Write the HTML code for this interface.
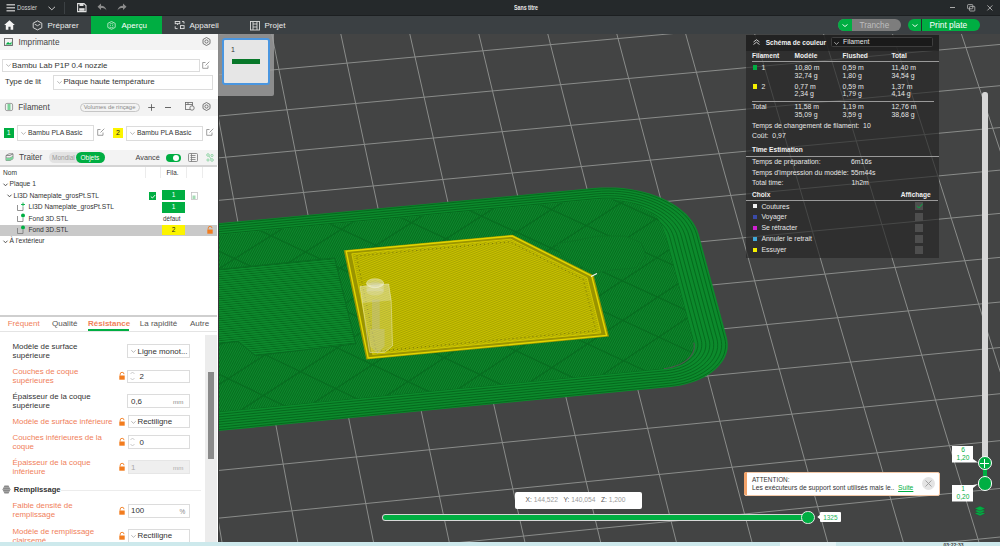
<!DOCTYPE html>
<html><head><meta charset="utf-8">
<style>
*{box-sizing:border-box;margin:0;padding:0}
body{width:1000px;height:546px;overflow:hidden;position:relative;font-family:"Liberation Sans",sans-serif;background:#434444}
.a{position:absolute}
.t{position:absolute;white-space:nowrap;line-height:1}
svg{position:absolute;overflow:visible}
.hd{position:absolute;left:0;width:218px;background:#f3f3f3}
.cb{position:absolute;border:1px solid #dcdcdc;background:#fff}
.ui{font-size:8px;color:#333}
.or{color:#f0805a}
.lk{position:absolute;width:6px;height:8px}
.inp{position:absolute;left:127px;width:63px;height:14px;border:1px solid #dcdcdc;background:#fff}
.st{color:#e6e6e6;font-size:6.9px}
.sb{color:#f0f0f0;font-size:6.6px;font-weight:700}
</style></head><body>

<!-- ============ TOP TITLE BAR ============ -->
<div class="a" style="left:0;top:0;width:1000px;height:16px;background:#25292b"></div>
<div class="a" style="left:0;top:15px;width:1000px;height:1px;background:#1c1f21"></div>
<svg style="left:6px;top:4px" width="10" height="8"><g stroke="#d6d6d6" stroke-width="1.2"><line x1="0.5" y1="0.8" x2="9" y2="0.8"/><line x1="0.5" y1="3.8" x2="9" y2="3.8"/><line x1="0.5" y1="6.8" x2="9" y2="6.8"/></g></svg>
<div class="t" style="left:17.3px;top:3.8px;font-size:7.2px;color:#d0d0d0;transform:scaleX(0.82);transform-origin:left">Dossier</div>
<svg style="left:48px;top:6px" width="8" height="5"><polyline points="0.5,0.8 3.8,3.8 7,0.8" stroke="#c8c8c8" stroke-width="1" fill="none"/></svg>
<div class="a" style="left:64px;top:2px;width:1px;height:12px;background:#3c4144"></div>
<svg style="left:77px;top:2.6px" width="10" height="10"><path d="M0.6 0.6 H7 L9 2.6 V8.6 H0.6 Z" fill="none" stroke="#e0e0e0" stroke-width="1.1"/><rect x="2.2" y="5.2" width="5.4" height="2.6" fill="#e0e0e0"/><rect x="2.5" y="0.6" width="4" height="2.4" fill="#e0e0e0"/></svg>
<svg style="left:97px;top:3.3px" width="10" height="8"><path d="M4 0.5 L0.5 3.8 L4 7 V5 C6.5 5 8.5 5.5 9.5 7.5 C9 4.5 7 2.8 4 2.7 Z" fill="#8c8c8c"/></svg>
<svg style="left:117px;top:3.3px" width="10" height="8"><path d="M6 0.5 L9.5 3.8 L6 7 V5 C3.5 5 1.5 5.5 0.5 7.5 C1 4.5 3 2.8 6 2.7 Z" fill="#8c8c8c"/></svg>
<div class="t" style="left:513.6px;top:5.1px;font-size:6.6px;color:#e8e8e8;font-weight:700;transform:scaleX(0.8);transform-origin:left">Sans titre</div>
<div class="a" style="left:950px;top:6.7px;width:5px;height:1px;background:#aaa"></div>
<svg style="left:966.5px;top:3.8px" width="9" height="8"><rect x="0.6" y="0.6" width="5.2" height="4.2" rx="0.6" fill="none" stroke="#b4b4b4" stroke-width="0.85"/><rect x="2.6" y="2.4" width="5.2" height="4.6" rx="0.6" fill="none" stroke="#b4b4b4" stroke-width="0.85"/></svg>
<svg style="left:986.5px;top:4.8px" width="6" height="6"><g stroke="#b4b4b4" stroke-width="0.9"><line x1="0.4" y1="0.4" x2="5.4" y2="5.4"/><line x1="5.4" y1="0.4" x2="0.4" y2="5.4"/></g></svg>

<!-- ============ TAB BAR ============ -->
<div class="a" style="left:0;top:16px;width:1000px;height:18px;background:#3b4043"></div>
<svg style="left:4px;top:20px" width="11" height="10"><path d="M5.5 0.3 L10.8 5 H9.2 V9.8 H6.6 V6.8 H4.4 V9.8 H1.8 V5 H0.2 Z" fill="#f4f4f4"/></svg>
<svg style="left:32px;top:20px" width="11" height="11"><path d="M5.5 0.9 L9.8 3.1 V7.7 L5.5 9.9 L1.2 7.7 V3.1 Z" fill="none" stroke="#d8d8d8" stroke-width="0.95" stroke-linejoin="round"/><path d="M2.6 4.1 L5.5 5.7 L8.4 4.1" fill="none" stroke="#d8d8d8" stroke-width="0.9"/></svg>
<div class="t" style="left:47.5px;top:21.7px;font-size:8px;color:#ececec">Préparer</div>
<div class="a" style="left:91px;top:16px;width:71px;height:18px;background:#00ae42"></div>
<svg style="left:107px;top:20.5px" width="9" height="9"><path d="M4.5 0.5 L8.2 2.4 V6.4 L4.5 8.3 L0.8 6.4 V2.4 Z" fill="none" stroke="#b8e8c8" stroke-width="0.9" stroke-linejoin="round"/><path d="M2.6 3.2 Q4.5 1.6 6.4 3.2 M2.5 6 Q4.5 7.4 6.5 6" fill="none" stroke="#b8e8c8" stroke-width="0.8"/><circle cx="3.4" cy="4.6" r="0.5" fill="#b8e8c8"/><circle cx="5.6" cy="4.6" r="0.5" fill="#b8e8c8"/></svg>
<div class="t" style="left:121.5px;top:21.7px;font-size:8px;color:#fff">Aperçu</div>
<svg style="left:174px;top:20px" width="11" height="10"><g fill="none" stroke="#e0e0e0" stroke-width="0.9"><rect x="1.2" y="1.5" width="4.6" height="2.2"/><path d="M3.5 3.7 V4.9 M8 1.6 H10 V3.6 M1.2 6.3 V8.6 H3.6"/><rect x="6.5" y="5.6" width="3.6" height="3"/></g></svg>
<div class="t" style="left:189.5px;top:21.7px;font-size:8px;color:#ececec">Appareil</div>
<svg style="left:250px;top:20.5px" width="10" height="10"><g fill="none" stroke="#dcdcdc" stroke-width="0.9"><rect x="0.5" y="0.5" width="9" height="8.5"/><path d="M3 0.5 V9 M7 0.5 V9 M3 3 H7 M3 6 H7"/></g></svg>
<div class="t" style="left:264.5px;top:21.7px;font-size:8px;color:#ececec">Projet</div>
<!-- Tranche -->
<div class="a" style="left:838px;top:19px;width:62.5px;height:12px;border-radius:6px;background:#7d7d7d;overflow:hidden"><div class="a" style="left:0;top:0;width:13.5px;height:12px;background:#00ae42"></div></div>
<svg style="left:842px;top:24px" width="6" height="3"><polyline points="0.5,0.5 3,2.5 5.5,0.5" stroke="#fff" stroke-width="0.9" fill="none"/></svg>
<div class="t" style="left:859.5px;top:22px;font-size:8.2px;color:#bdbdbd">Tranche</div>
<!-- Print plate -->
<div class="a" style="left:908px;top:19px;width:72px;height:12px;border-radius:6px;background:#00ae42"></div>
<div class="a" style="left:921px;top:19px;width:1px;height:12px;background:#25292b"></div>
<svg style="left:912px;top:24px" width="6" height="3"><polyline points="0.5,0.5 3,2.5 5.5,0.5" stroke="#fff" stroke-width="0.9" fill="none"/></svg>
<div class="t" style="left:929.5px;top:21.3px;font-size:8.4px;color:#fff">Print plate</div>

<!-- ============ VIEWPORT ============ -->
<div class="a" style="left:218px;top:34px;width:782px;height:508px;overflow:hidden"><svg width="782" height="508" viewBox="0 0 782 508" style="position:absolute;left:0;top:0">
<defs>
 <pattern id="gstripe" patternUnits="userSpaceOnUse" width="6" height="2.2" patternTransform="rotate(-5.5)">
   <rect width="6" height="2.2" fill="#0d8b2d"/><rect y="1.35" width="6" height="0.85" fill="#066c1e"/>
 </pattern>
 <pattern id="gstripe2" patternUnits="userSpaceOnUse" width="6" height="2.0" patternTransform="rotate(-62)">
   <rect width="6" height="2.0" fill="#0d8a2d"/><rect y="1.05" width="6" height="0.95" fill="#066a1e"/>
 </pattern>
 <pattern id="ystripe" patternUnits="userSpaceOnUse" width="6" height="2" patternTransform="rotate(-22)">
   <rect width="6" height="2" fill="#c9c300"/><rect y="1.25" width="6" height="0.75" fill="#9d9800"/>
 </pattern>
 <clipPath id="innerclip"><polygon points="377.4,165.6 382.1,165.2 386.7,165.1 391.4,165.3 396.1,165.6 400.7,166.2 405.2,166.9 409.6,167.9 413.9,169.1 418.0,170.5 421.9,172.1 425.6,173.9 429.0,175.8 432.2,178.0 435.1,180.2 437.8,182.6 440.1,185.1 442.1,187.7 443.7,190.4 445.0,193.2 445.9,196.0 475.8,308.7 476.2,310.5 476.3,312.3 476.2,314.0 475.9,315.8 475.4,317.5 474.6,319.2 473.7,320.9 472.5,322.5 471.1,324.0 469.5,325.5 467.8,326.9 465.9,328.2 463.8,329.4 461.6,330.5 459.2,331.5 456.7,332.3 454.2,333.1 451.5,333.7 448.8,334.2 446.0,334.5 -230.4,400.2 -231.0,400.2 -231.6,400.3 -232.1,400.2 -232.7,400.2 -233.3,400.1 -233.8,400.0 -234.3,399.9 -234.9,399.7 -235.3,399.6 -235.8,399.4 -236.2,399.1 -236.6,398.9 -237.0,398.6 -237.3,398.3 -237.6,398.0 -237.8,397.7 -238.0,397.4 -238.2,397.0 -238.3,396.7 -238.4,396.3 -260.7,229.8 -260.7,229.5 -260.7,229.1 -260.7,228.8 -260.6,228.4 -260.4,228.1 -260.2,227.8 -260.0,227.4 -259.7,227.1 -259.4,226.8 -259.0,226.6 -258.7,226.3 -258.3,226.0 -257.8,225.8 -257.4,225.6 -256.9,225.4 -256.4,225.2 -255.8,225.1 -255.3,225.0 -254.7,224.9 -254.2,224.8"/></clipPath>
</defs>
<rect width="782" height="508" fill="#434444"/>
<g stroke="#8a8c8a" stroke-width="1" fill="none"><line x1="-236.8" y1="-97.0" x2="-120.0" y2="695.5"/>
<line x1="-169.9" y1="-102.8" x2="-43.0" y2="687.6"/>
<line x1="-103.2" y1="-108.7" x2="33.8" y2="679.7"/>
<line x1="-36.7" y1="-114.5" x2="110.4" y2="671.8"/>
<line x1="29.7" y1="-120.4" x2="186.7" y2="663.9"/>
<line x1="95.9" y1="-126.2" x2="262.8" y2="656.1"/>
<line x1="161.9" y1="-132.0" x2="338.7" y2="648.3"/>
<line x1="227.8" y1="-137.8" x2="414.4" y2="640.5"/>
<line x1="293.5" y1="-143.5" x2="489.9" y2="632.7"/>
<line x1="359.1" y1="-149.3" x2="565.1" y2="625.0"/>
<line x1="424.4" y1="-155.1" x2="640.1" y2="617.3"/>
<line x1="489.7" y1="-160.8" x2="715.0" y2="609.6"/>
<line x1="554.7" y1="-166.5" x2="789.6" y2="601.9"/>
<line x1="619.6" y1="-172.2" x2="864.0" y2="594.2"/>
<line x1="684.4" y1="-177.9" x2="938.1" y2="586.6"/>
<line x1="749.0" y1="-183.6" x2="1012.1" y2="579.0"/>
<line x1="813.4" y1="-189.2" x2="1085.9" y2="571.4"/>
<line x1="877.6" y1="-194.9" x2="1159.5" y2="563.8"/>
<line x1="-366.3" y1="-46.6" x2="955.9" y2="-163.7"/>
<line x1="-361.6" y1="-7.4" x2="970.3" y2="-126.3"/>
<line x1="-356.8" y1="32.4" x2="984.9" y2="-88.4"/>
<line x1="-351.9" y1="72.8" x2="999.7" y2="-49.9"/>
<line x1="-346.9" y1="113.9" x2="1014.7" y2="-10.9"/>
<line x1="-341.9" y1="155.5" x2="1029.9" y2="28.8"/>
<line x1="-336.7" y1="197.8" x2="1045.4" y2="69.0"/>
<line x1="-331.5" y1="240.8" x2="1061.1" y2="109.9"/>
<line x1="-326.3" y1="284.5" x2="1077.1" y2="151.4"/>
<line x1="-320.9" y1="328.9" x2="1093.3" y2="193.6"/>
<line x1="-315.4" y1="374.0" x2="1109.8" y2="236.4"/>
<line x1="-309.9" y1="419.8" x2="1126.5" y2="280.0"/>
<line x1="-304.2" y1="466.4" x2="1143.5" y2="324.2"/>
<line x1="-298.5" y1="513.8" x2="1160.8" y2="369.1"/>
<line x1="-292.7" y1="561.9" x2="1178.4" y2="414.8"/>
<line x1="-286.8" y1="610.9" x2="1196.2" y2="461.2"/>
<line x1="-280.7" y1="660.7" x2="1214.4" y2="508.3"/>
<line x1="-274.6" y1="711.4" x2="1232.8" y2="556.3"/></g>
<polygon points="375.9,154.1 383.0,153.6 390.2,153.4 397.3,153.6 404.4,154.1 411.5,155.0 418.4,156.2 425.1,157.7 431.6,159.5 437.9,161.7 443.8,164.1 449.5,166.8 454.8,169.8 459.7,173.0 464.1,176.4 468.2,180.1 471.7,183.9 474.8,187.9 477.3,192.0 479.3,196.2 480.8,200.5 508.9,304.0 509.5,307.3 509.8,310.6 509.7,314.0 509.1,317.3 508.1,320.6 506.7,323.8 504.9,327.0 502.6,330.1 500.0,333.0 497.1,335.8 493.8,338.5 490.1,340.9 486.2,343.2 482.0,345.3 477.5,347.2 472.8,348.8 467.8,350.3 462.8,351.4 457.6,352.3 452.2,353.0 -227.8,419.3 -228.4,419.4 -229.0,419.4 -229.6,419.3 -230.1,419.3 -230.7,419.2 -231.2,419.1 -231.8,419.0 -232.3,418.8 -232.8,418.7 -233.2,418.5 -233.6,418.2 -234.0,418.0 -234.4,417.7 -234.7,417.4 -235.0,417.1 -235.3,416.8 -235.5,416.5 -235.6,416.1 -235.7,415.8 -235.8,415.4 -262.3,218.2 -262.3,217.8 -262.3,217.5 -262.2,217.2 -262.1,216.8 -262.0,216.5 -261.8,216.2 -261.5,215.8 -261.3,215.5 -261.0,215.2 -260.6,214.9 -260.2,214.7 -259.8,214.4 -259.4,214.2 -258.9,214.0 -258.4,213.8 -257.9,213.6 -257.4,213.5 -256.9,213.4 -256.3,213.3 -255.8,213.2" fill="#0c8a2c"/>
<g fill="none" stroke="#05641b" stroke-width="0.85"><polygon points="376.2,155.3 383.2,154.9 390.2,154.7 397.2,154.9 404.1,155.4 411.0,156.2 417.7,157.4 424.3,158.9 430.6,160.7 436.8,162.8 442.6,165.1 448.1,167.8 453.3,170.7 458.1,173.8 462.4,177.2 466.4,180.7 469.9,184.5 472.8,188.4 475.3,192.4 477.3,196.5 478.7,200.7 506.7,304.2 507.4,307.4 507.7,310.6 507.5,313.9 506.9,317.1 506.0,320.3 504.6,323.4 502.8,326.5 500.7,329.4 498.2,332.3 495.3,335.0 492.1,337.6 488.6,340.0 484.8,342.2 480.7,344.2 476.3,346.0 471.8,347.6 467.0,349.0 462.1,350.1 457.0,351.0 451.9,351.6 -225.8,417.7 -226.4,417.8 -227.0,417.8 -227.5,417.7 -228.1,417.7 -228.7,417.6 -229.2,417.5 -229.7,417.4 -230.3,417.2 -230.7,417.1 -231.2,416.9 -231.6,416.6 -232.0,416.4 -232.4,416.1 -232.7,415.8 -233.0,415.5 -233.2,415.2 -233.4,414.9 -233.6,414.5 -233.7,414.2 -233.8,413.8 -260.0,219.3 -260.0,218.9 -260.0,218.6 -259.9,218.2 -259.8,217.9 -259.7,217.6 -259.5,217.2 -259.2,216.9 -259.0,216.6 -258.7,216.3 -258.3,216.0 -257.9,215.8 -257.5,215.5 -257.1,215.3 -256.6,215.1 -256.1,214.9 -255.6,214.7 -255.1,214.6 -254.6,214.5 -254.0,214.4 -253.5,214.3"/><polygon points="376.8,157.7 383.5,157.2 390.1,157.0 396.8,157.2 403.5,157.7 410.1,158.5 416.5,159.6 422.8,161.0 428.9,162.8 434.7,164.8 440.3,167.0 445.6,169.6 450.6,172.3 455.1,175.3 459.3,178.5 463.1,181.9 466.4,185.5 469.3,189.3 471.6,193.1 473.5,197.1 474.9,201.1 502.8,304.5 503.4,307.6 503.7,310.6 503.5,313.7 503.0,316.7 502.1,319.7 500.8,322.6 499.1,325.5 497.1,328.3 494.8,331.0 492.1,333.5 489.0,335.9 485.7,338.2 482.1,340.3 478.3,342.2 474.2,343.9 469.9,345.4 465.4,346.7 460.8,347.7 456.1,348.6 451.2,349.2 -222.1,414.8 -222.7,414.8 -223.3,414.8 -223.8,414.8 -224.4,414.8 -225.0,414.7 -225.5,414.6 -226.0,414.5 -226.6,414.3 -227.0,414.1 -227.5,413.9 -227.9,413.7 -228.3,413.5 -228.7,413.2 -229.0,412.9 -229.3,412.6 -229.5,412.3 -229.7,411.9 -229.9,411.6 -230.0,411.2 -230.1,410.9 -255.7,221.3 -255.8,220.9 -255.8,220.6 -255.7,220.2 -255.6,219.9 -255.4,219.6 -255.2,219.2 -255.0,218.9 -254.7,218.6 -254.4,218.3 -254.1,218.0 -253.7,217.8 -253.3,217.5 -252.8,217.3 -252.4,217.1 -251.9,216.9 -251.4,216.7 -250.9,216.6 -250.3,216.5 -249.8,216.4 -249.2,216.3"/><polygon points="377.4,160.0 383.7,159.5 390.1,159.4 396.5,159.5 402.9,160.0 409.2,160.8 415.3,161.8 421.3,163.2 427.1,164.8 432.7,166.7 438.1,168.9 443.1,171.3 447.8,174.0 452.2,176.9 456.2,179.9 459.8,183.2 463.0,186.6 465.7,190.1 467.9,193.8 469.7,197.6 471.0,201.5 498.9,304.9 499.5,307.8 499.7,310.6 499.6,313.5 499.1,316.3 498.2,319.1 497.0,321.9 495.5,324.6 493.6,327.2 491.4,329.7 488.8,332.1 486.0,334.3 482.9,336.4 479.5,338.4 475.9,340.2 472.1,341.8 468.1,343.2 463.9,344.4 459.6,345.4 455.1,346.1 450.6,346.7 -218.4,411.8 -219.0,411.9 -219.6,411.9 -220.1,411.9 -220.7,411.8 -221.3,411.8 -221.8,411.7 -222.3,411.5 -222.8,411.4 -223.3,411.2 -223.8,411.0 -224.2,410.8 -224.6,410.5 -225.0,410.3 -225.3,410.0 -225.6,409.7 -225.8,409.3 -226.0,409.0 -226.2,408.7 -226.3,408.3 -226.4,408.0 -251.5,223.3 -251.5,222.9 -251.5,222.6 -251.5,222.2 -251.3,221.9 -251.2,221.6 -251.0,221.2 -250.8,220.9 -250.5,220.6 -250.2,220.3 -249.8,220.0 -249.5,219.8 -249.1,219.5 -248.6,219.3 -248.2,219.1 -247.7,218.9 -247.2,218.7 -246.6,218.6 -246.1,218.5 -245.5,218.4 -245.0,218.3"/><polygon points="378.0,162.3 384.0,161.9 390.1,161.7 396.2,161.9 402.3,162.3 408.2,163.1 414.1,164.1 419.8,165.4 425.4,166.9 430.7,168.7 435.8,170.8 440.6,173.1 445.1,175.6 449.3,178.4 453.1,181.3 456.5,184.4 459.5,187.7 462.1,191.0 464.3,194.6 465.9,198.2 467.2,201.8 495.0,305.3 495.5,307.9 495.7,310.6 495.6,313.3 495.1,315.9 494.3,318.5 493.2,321.1 491.8,323.6 490.0,326.0 487.9,328.4 485.6,330.6 482.9,332.7 480.1,334.7 476.9,336.5 473.6,338.1 470.0,339.6 466.3,340.9 462.4,342.1 458.3,343.0 454.2,343.7 450.0,344.2 -214.7,408.9 -215.3,409.0 -215.9,409.0 -216.4,409.0 -217.0,408.9 -217.6,408.8 -218.1,408.7 -218.6,408.6 -219.2,408.5 -219.6,408.3 -220.1,408.1 -220.5,407.9 -220.9,407.6 -221.3,407.3 -221.6,407.0 -221.9,406.7 -222.1,406.4 -222.3,406.1 -222.5,405.7 -222.6,405.4 -222.7,405.0 -247.3,225.3 -247.3,224.9 -247.3,224.6 -247.2,224.2 -247.1,223.9 -247.0,223.6 -246.8,223.2 -246.5,222.9 -246.3,222.6 -246.0,222.3 -245.6,222.0 -245.2,221.8 -244.8,221.5 -244.4,221.3 -243.9,221.1 -243.4,220.9 -242.9,220.7 -242.4,220.6 -241.9,220.4 -241.3,220.4 -240.8,220.3"/><polygon points="378.6,164.6 384.3,164.2 390.1,164.1 395.9,164.2 401.7,164.6 407.3,165.3 412.9,166.3 418.4,167.5 423.6,169.0 428.7,170.7 433.5,172.7 438.1,174.9 442.4,177.3 446.3,179.9 449.9,182.7 453.2,185.6 456.1,188.7 458.5,191.9 460.6,195.3 462.2,198.7 463.3,202.2 491.1,305.7 491.6,308.1 491.8,310.6 491.6,313.1 491.2,315.5 490.5,317.9 489.4,320.3 488.1,322.7 486.4,324.9 484.5,327.1 482.3,329.1 479.9,331.1 477.2,332.9 474.3,334.6 471.2,336.1 467.9,337.5 464.4,338.7 460.8,339.7 457.1,340.6 453.2,341.3 449.3,341.8 -211.0,406.0 -211.6,406.0 -212.2,406.1 -212.7,406.0 -213.3,406.0 -213.9,405.9 -214.4,405.8 -214.9,405.7 -215.5,405.5 -215.9,405.4 -216.4,405.2 -216.8,404.9 -217.2,404.7 -217.6,404.4 -217.9,404.1 -218.2,403.8 -218.4,403.5 -218.6,403.2 -218.8,402.8 -218.9,402.5 -219.0,402.1 -243.0,227.3 -243.1,226.9 -243.0,226.6 -243.0,226.2 -242.9,225.9 -242.7,225.6 -242.5,225.2 -242.3,224.9 -242.0,224.6 -241.7,224.3 -241.4,224.0 -241.0,223.8 -240.6,223.5 -240.1,223.3 -239.7,223.1 -239.2,222.9 -238.7,222.7 -238.2,222.6 -237.6,222.4 -237.1,222.4 -236.5,222.3"/><polygon points="379.2,166.9 384.6,166.5 390.1,166.4 395.6,166.5 401.0,166.9 406.4,167.6 411.7,168.5 416.9,169.7 421.9,171.1 426.7,172.7 431.3,174.6 435.6,176.7 439.6,179.0 443.4,181.4 446.8,184.1 449.9,186.9 452.6,189.8 454.9,192.8 456.9,196.0 458.4,199.2 459.5,202.6 487.2,306.1 487.6,308.3 487.8,310.6 487.7,312.9 487.3,315.1 486.6,317.4 485.6,319.6 484.4,321.7 482.9,323.8 481.1,325.8 479.1,327.7 476.8,329.5 474.4,331.1 471.7,332.7 468.8,334.1 465.8,335.4 462.6,336.5 459.3,337.4 455.8,338.2 452.3,338.8 448.7,339.3 -207.3,403.1 -207.9,403.1 -208.5,403.1 -209.1,403.1 -209.6,403.1 -210.2,403.0 -210.7,402.9 -211.3,402.8 -211.8,402.6 -212.3,402.4 -212.7,402.2 -213.1,402.0 -213.5,401.8 -213.9,401.5 -214.2,401.2 -214.5,400.9 -214.8,400.6 -215.0,400.3 -215.1,399.9 -215.2,399.6 -215.3,399.2 -238.8,229.3 -238.8,228.9 -238.8,228.6 -238.7,228.2 -238.6,227.9 -238.5,227.6 -238.3,227.2 -238.1,226.9 -237.8,226.6 -237.5,226.3 -237.1,226.0 -236.8,225.8 -236.3,225.5 -235.9,225.3 -235.4,225.1 -235.0,224.9 -234.4,224.7 -233.9,224.6 -233.4,224.4 -232.8,224.4 -232.3,224.3"/><polygon points="379.7,169.2 384.9,168.9 390.1,168.7 395.3,168.9 400.4,169.3 405.5,169.9 410.5,170.8 415.4,171.9 420.1,173.2 424.7,174.7 429.0,176.5 433.1,178.5 436.9,180.6 440.4,182.9 443.7,185.4 446.6,188.1 449.1,190.9 451.3,193.7 453.2,196.7 454.6,199.8 455.7,202.9 483.3,306.4 483.7,308.5 483.8,310.6 483.7,312.7 483.4,314.7 482.7,316.8 481.8,318.8 480.7,320.7 479.3,322.6 477.7,324.5 475.9,326.2 473.8,327.8 471.5,329.4 469.1,330.8 466.5,332.1 463.7,333.2 460.8,334.3 457.7,335.1 454.6,335.8 451.3,336.4 448.0,336.8 -203.6,400.2 -204.2,400.2 -204.8,400.2 -205.4,400.2 -205.9,400.2 -206.5,400.1 -207.0,400.0 -207.6,399.9 -208.1,399.7 -208.6,399.5 -209.0,399.3 -209.4,399.1 -209.8,398.8 -210.2,398.6 -210.5,398.3 -210.8,398.0 -211.1,397.7 -211.3,397.3 -211.4,397.0 -211.5,396.6 -211.6,396.3 -234.5,231.3 -234.6,230.9 -234.6,230.6 -234.5,230.2 -234.4,229.9 -234.2,229.6 -234.0,229.2 -233.8,228.9 -233.5,228.6 -233.2,228.3 -232.9,228.0 -232.5,227.8 -232.1,227.5 -231.7,227.3 -231.2,227.1 -230.7,226.9 -230.2,226.7 -229.7,226.6 -229.1,226.5 -228.6,226.4 -228.0,226.3"/><polygon points="380.3,171.5 385.2,171.2 390.1,171.1 395.0,171.2 399.8,171.6 404.6,172.2 409.3,173.0 413.9,174.0 418.4,175.3 422.6,176.7 426.7,178.4 430.6,180.2 434.2,182.3 437.5,184.5 440.5,186.8 443.3,189.3 445.7,191.9 447.8,194.6 449.5,197.5 450.8,200.3 451.8,203.3 479.3,306.8 479.7,308.7 479.9,310.6 479.8,312.5 479.4,314.3 478.9,316.2 478.1,318.0 477.0,319.8 475.8,321.5 474.3,323.2 472.6,324.7 470.8,326.2 468.7,327.6 466.5,328.9 464.1,330.1 461.6,331.1 458.9,332.0 456.2,332.8 453.3,333.5 450.4,334.0 447.4,334.4 -200.0,397.2 -200.5,397.3 -201.1,397.3 -201.7,397.3 -202.3,397.2 -202.8,397.2 -203.4,397.1 -203.9,396.9 -204.4,396.8 -204.9,396.6 -205.3,396.4 -205.8,396.2 -206.2,395.9 -206.5,395.7 -206.9,395.4 -207.1,395.1 -207.4,394.8 -207.6,394.4 -207.7,394.1 -207.9,393.7 -207.9,393.4 -230.3,233.3 -230.3,232.9 -230.3,232.6 -230.2,232.3 -230.1,231.9 -230.0,231.6 -229.8,231.2 -229.6,230.9 -229.3,230.6 -229.0,230.3 -228.6,230.0 -228.3,229.8 -227.9,229.5 -227.4,229.3 -227.0,229.1 -226.5,228.9 -226.0,228.7 -225.4,228.6 -224.9,228.5 -224.3,228.4 -223.8,228.3"/><polygon points="380.9,173.9 385.5,173.5 390.1,173.4 394.7,173.6 399.2,173.9 403.7,174.5 408.1,175.2 412.4,176.2 416.6,177.4 420.6,178.7 424.4,180.3 428.0,182.0 431.4,183.9 434.6,186.0 437.4,188.2 440.0,190.5 442.2,193.0 444.2,195.5 445.8,198.2 447.1,200.9 448.0,203.6 475.4,307.2 475.8,308.9 475.9,310.6 475.8,312.3 475.5,313.9 475.0,315.6 474.3,317.2 473.3,318.8 472.2,320.4 470.9,321.8 469.4,323.3 467.7,324.6 465.9,325.8 463.9,327.0 461.7,328.0 459.5,329.0 457.1,329.8 454.6,330.5 452.1,331.1 449.4,331.6 446.8,331.9 -196.3,394.3 -196.9,394.4 -197.4,394.4 -198.0,394.4 -198.6,394.3 -199.1,394.3 -199.7,394.2 -200.2,394.0 -200.7,393.9 -201.2,393.7 -201.7,393.5 -202.1,393.3 -202.5,393.0 -202.8,392.8 -203.2,392.5 -203.5,392.2 -203.7,391.8 -203.9,391.5 -204.1,391.2 -204.2,390.8 -204.3,390.5 -226.0,235.3 -226.1,235.0 -226.1,234.6 -226.0,234.3 -225.9,233.9 -225.7,233.6 -225.5,233.3 -225.3,232.9 -225.0,232.6 -224.7,232.3 -224.4,232.0 -224.0,231.8 -223.6,231.5 -223.2,231.3 -222.7,231.1 -222.2,230.9 -221.7,230.7 -221.2,230.6 -220.6,230.5 -220.1,230.4 -219.5,230.3"/></g>
<polygon points="377.4,165.6 382.1,165.2 386.7,165.1 391.4,165.3 396.1,165.6 400.7,166.2 405.2,166.9 409.6,167.9 413.9,169.1 418.0,170.5 421.9,172.1 425.6,173.9 429.0,175.8 432.2,178.0 435.1,180.2 437.8,182.6 440.1,185.1 442.1,187.7 443.7,190.4 445.0,193.2 445.9,196.0 475.8,308.7 476.2,310.5 476.3,312.3 476.2,314.0 475.9,315.8 475.4,317.5 474.6,319.2 473.7,320.9 472.5,322.5 471.1,324.0 469.5,325.5 467.8,326.9 465.9,328.2 463.8,329.4 461.6,330.5 459.2,331.5 456.7,332.3 454.2,333.1 451.5,333.7 448.8,334.2 446.0,334.5 -230.4,400.2 -231.0,400.2 -231.6,400.3 -232.1,400.2 -232.7,400.2 -233.3,400.1 -233.8,400.0 -234.3,399.9 -234.9,399.7 -235.3,399.6 -235.8,399.4 -236.2,399.1 -236.6,398.9 -237.0,398.6 -237.3,398.3 -237.6,398.0 -237.8,397.7 -238.0,397.4 -238.2,397.0 -238.3,396.7 -238.4,396.3 -260.7,229.8 -260.7,229.5 -260.7,229.1 -260.7,228.8 -260.6,228.4 -260.4,228.1 -260.2,227.8 -260.0,227.4 -259.7,227.1 -259.4,226.8 -259.0,226.6 -258.7,226.3 -258.3,226.0 -257.8,225.8 -257.4,225.6 -256.9,225.4 -256.4,225.2 -255.8,225.1 -255.3,225.0 -254.7,224.9 -254.2,224.8" fill="url(#gstripe2)"/>
<g clip-path="url(#innerclip)" stroke="#086e21" stroke-width="1.3" fill="none"><line x1="-620.5" y1="246.1" x2="-264.5" y2="424.8"/><line x1="-548.6" y1="239.3" x2="-190.8" y2="417.6"/><line x1="-477.0" y1="232.6" x2="-117.3" y2="410.4"/><line x1="-405.5" y1="225.9" x2="-44.0" y2="403.2"/><line x1="-334.2" y1="219.3" x2="29.1" y2="396.1"/><line x1="-263.0" y1="212.6" x2="102.0" y2="389.0"/><line x1="-192.1" y1="206.0" x2="174.7" y2="381.9"/><line x1="-121.4" y1="199.3" x2="247.2" y2="374.8"/><line x1="-50.8" y1="192.7" x2="319.5" y2="367.8"/><line x1="19.6" y1="186.1" x2="391.6" y2="360.8"/><line x1="89.7" y1="179.6" x2="463.5" y2="353.7"/><line x1="159.7" y1="173.0" x2="535.2" y2="346.8"/><line x1="229.6" y1="166.5" x2="606.7" y2="339.8"/><line x1="299.2" y1="160.0" x2="678.0" y2="332.8"/><line x1="368.6" y1="153.5" x2="749.1" y2="325.9"/><line x1="437.9" y1="147.0" x2="820.1" y2="319.0"/><line x1="507.0" y1="140.5" x2="890.8" y2="312.1"/><line x1="575.9" y1="134.1" x2="961.4" y2="305.2"/><line x1="644.6" y1="127.7" x2="1031.7" y2="298.3"/><line x1="713.2" y1="121.2" x2="1101.9" y2="291.5"/><line x1="781.5" y1="114.8" x2="1171.9" y2="284.6"/><line x1="849.7" y1="108.5" x2="1241.7" y2="277.8"/><line x1="-606.1" y1="458.1" x2="-193.5" y2="206.1"/><line x1="-531.4" y1="450.8" x2="-122.8" y2="199.5"/><line x1="-457.0" y1="443.5" x2="-52.2" y2="192.9"/><line x1="-382.8" y1="436.3" x2="18.2" y2="186.3"/><line x1="-308.8" y1="429.1" x2="88.3" y2="179.7"/><line x1="-234.9" y1="421.9" x2="158.3" y2="173.2"/><line x1="-161.3" y1="414.7" x2="228.2" y2="166.6"/><line x1="-87.9" y1="407.5" x2="297.8" y2="160.1"/><line x1="-14.7" y1="400.4" x2="367.3" y2="153.6"/><line x1="58.3" y1="393.3" x2="436.5" y2="147.1"/><line x1="131.1" y1="386.2" x2="505.6" y2="140.7"/><line x1="203.7" y1="379.1" x2="574.5" y2="134.2"/><line x1="276.1" y1="372.0" x2="643.3" y2="127.8"/><line x1="348.3" y1="365.0" x2="711.8" y2="121.4"/><line x1="420.4" y1="358.0" x2="780.2" y2="115.0"/><line x1="492.2" y1="350.9" x2="848.4" y2="108.6"/><line x1="563.8" y1="344.0" x2="916.4" y2="102.2"/><line x1="635.2" y1="337.0" x2="984.2" y2="95.9"/><line x1="706.5" y1="330.0" x2="1051.9" y2="89.5"/><line x1="777.5" y1="323.1" x2="1119.4" y2="83.2"/><line x1="848.4" y1="316.2" x2="1186.7" y2="76.9"/><line x1="919.0" y1="309.3" x2="1253.8" y2="70.6"/><line x1="989.5" y1="302.4" x2="1320.8" y2="64.4"/><line x1="1059.8" y1="295.6" x2="1387.6" y2="58.1"/></g>
<polygon points="-256.5,261.0 116.6,224.0 137.7,309.8 37.6,321.7 20.3,307.5 -246.6,335.4" fill="url(#gstripe)" stroke="#086a20" stroke-width="0.9"/>
<polygon transform="translate(-218,-34)" points="556,244 578,240 598,236 625,236 642,243 646,258 635,268 612,270 595,273 580,266 562,256" fill="url(#gstripe2)" stroke="#0a7424" stroke-width="0.8"/>
<polyline points="475.8,308.7 476.2,310.5 476.3,312.3 476.2,314.0 475.9,315.8 475.4,317.5 474.6,319.2 473.7,320.9 472.5,322.5 471.1,324.0 469.5,325.5 467.8,326.9 465.9,328.2 463.8,329.4 461.6,330.5 459.2,331.5 456.7,332.3 454.2,333.1 451.5,333.7 448.8,334.2 446.0,334.5" fill="none" stroke="#4d5a4f" stroke-width="1.1"/>
<polygon points="125.8,216.2 294.6,200.7 375.7,241.3 391.0,302.6 148.3,325.6" fill="#9a9400"/>
<polygon points="128.2,217.2 294.2,202.0 373.7,242.0 388.6,301.5 150.2,324.0" fill="none" stroke="#e2d600" stroke-width="1.4"/>
<polygon points="133.8,219.8 292.8,205.2 369.1,243.7 382.8,298.9 154.6,320.4" fill="url(#ystripe)" stroke="#d4ca00" stroke-width="0.9"/>
<polygon points="138.5,222.0 292.0,207.9 365.2,245.4 377.9,296.7 158.3,317.3" fill="none" stroke="#5d5a10" stroke-width="0.7" stroke-dasharray="1 3"/>
<g transform="translate(-218,-34)">
<polygon points="360,286.5 388.7,284 391.2,300.5 392.5,345.8 384.6,352.5 369.8,352.5 369,349 362.4,303" fill="rgba(232,232,190,0.26)" stroke="rgba(245,245,220,0.45)" stroke-width="0.9"/>
<polygon points="360,286.5 388.7,284 391.2,300.5 362.4,303" fill="rgba(240,240,215,0.30)"/>
<rect x="372" y="299.6" width="7.7" height="30" fill="rgba(190,190,170,0.35)"/>
<polygon points="369.8,329 384.6,329 384.6,346 377.5,354 369.8,346" fill="rgba(200,200,175,0.35)"/>
<rect x="366.5" y="283.2" width="17.3" height="8" fill="rgba(225,225,200,0.35)"/>
<ellipse cx="375.1" cy="291.2" rx="8.6" ry="4.3" fill="rgba(225,225,200,0.3)"/>
<ellipse cx="375.1" cy="283.2" rx="8.6" ry="4.5" fill="rgba(245,245,225,0.45)" stroke="rgba(250,250,235,0.5)" stroke-width="0.7"/>
<ellipse cx="375.1" cy="284" rx="5" ry="2.5" fill="rgba(200,200,170,0.35)"/>
<line x1="591" y1="276.5" x2="597" y2="273.5" stroke="#f4f4f4" stroke-width="1.2"/>
</g>
</svg></div>

<!-- ============ LEFT PANEL ============ -->
<div class="a" style="left:0;top:34px;width:218px;height:508px;background:#fff"></div>
<div class="a" style="left:218px;top:34px;width:1px;height:508px;background:#383838"></div>
<!-- Imprimante -->
<div class="hd" style="top:34px;height:16px"></div>
<svg style="left:4px;top:38px" width="9" height="8"><rect x="0.5" y="0.5" width="8" height="7" fill="none" stroke="#666" stroke-width="0.9"/><path d="M1.5 6.5 L4 4 L6 5.5 L7.5 3.5 V6.5 Z" fill="#00ae42"/></svg>
<div class="t ui" style="left:18.5px;top:38.6px;font-size:8.2px;color:#444">Imprimante</div>
<svg style="left:202px;top:37.2px" width="9" height="9"><path d="M4.5 0.5 L8 2.5 V6.5 L4.5 8.5 L1 6.5 V2.5 Z" fill="none" stroke="#666" stroke-width="0.9"/><circle cx="4.5" cy="4.5" r="1.6" fill="none" stroke="#666" stroke-width="0.9"/></svg>
<div class="cb" style="left:2px;top:58.5px;width:198px;height:13.5px"></div>
<svg style="left:6px;top:64px" width="5" height="3"><polyline points="0.3,0.3 2.5,2.3 4.7,0.3" stroke="#999" stroke-width="0.7" fill="none"/></svg>
<div class="t ui" style="left:12px;top:61.6px;font-size:7.9px">Bambu Lab P1P 0.4 nozzle</div>
<svg style="left:202px;top:61px" width="8" height="8"><path d="M6 4.5 V7.3 H0.7 V1.5 H3.5 M3.5 4.5 L7.3 0.7" fill="none" stroke="#888" stroke-width="0.8"/></svg>
<div class="t ui" style="left:5px;top:78.4px;font-size:7.9px">Type de lit</div>
<div class="cb" style="left:53px;top:74.5px;width:160px;height:15.5px"></div>
<svg style="left:57px;top:81px" width="5" height="3"><polyline points="0.3,0.3 2.5,2.3 4.7,0.3" stroke="#999" stroke-width="0.7" fill="none"/></svg>
<div class="t ui" style="left:63.5px;top:78.4px;font-size:7.9px">Plaque haute température</div>
<!-- Filament -->
<div class="hd" style="top:98.8px;height:17px"></div>
<svg style="left:5px;top:103px" width="8" height="8"><g fill="none" stroke="#888" stroke-width="0.8"><rect x="0.4" y="0.4" width="7.2" height="7.2" rx="1.5"/></g><rect x="2.5" y="1" width="3" height="6" fill="#7cd39a"/></svg>
<div class="t ui" style="left:18.3px;top:103.6px;font-size:8.2px;color:#444">Filament</div>
<div class="a" style="left:79.5px;top:102.5px;width:60px;height:9px;border:1px solid #c6c6c6;border-radius:5px"></div>
<div class="t" style="left:83.7px;top:105px;font-size:5.9px;color:#8a8a8a">Volumes de rinçage</div>
<svg style="left:148px;top:103.5px" width="7" height="7"><path d="M3.5 0.2 V6.8 M0.2 3.5 H6.8" stroke="#555" stroke-width="0.85"/></svg>
<div class="a" style="left:164.8px;top:106.6px;width:6.3px;height:0.8px;background:#666"></div>
<svg style="left:185px;top:102px" width="10" height="9"><g fill="none" stroke="#666" stroke-width="0.8"><rect x="0.5" y="0.5" width="7" height="7"/><path d="M0.5 2.5 H7.5 M3 0.5 V2.5"/><circle cx="7" cy="6" r="2.2" fill="#f3f3f3"/></g></svg>
<svg style="left:202px;top:102px" width="9" height="9"><path d="M4.5 0.5 L8 2.5 V6.5 L4.5 8.5 L1 6.5 V2.5 Z" fill="none" stroke="#666" stroke-width="0.9"/><circle cx="4.5" cy="4.5" r="1.6" fill="none" stroke="#666" stroke-width="0.9"/></svg>
<!-- filament row -->
<div class="a" style="left:3.7px;top:127.8px;width:10.2px;height:9.8px;background:#00ae42"></div>
<div class="t" style="left:6.8px;top:129px;font-size:7px;color:#fff">1</div>
<div class="cb" style="left:16.5px;top:125px;width:77px;height:15.5px"></div>
<svg style="left:21px;top:132px" width="5" height="3"><polyline points="0.3,0.3 2.5,2.3 4.7,0.3" stroke="#999" stroke-width="0.7" fill="none"/></svg>
<div class="t ui" style="left:27.8px;top:128.7px;font-size:7.4px;transform:scaleX(0.92);transform-origin:left">Bambu PLA Basic</div>
<svg style="left:97px;top:128px" width="8" height="8"><path d="M6 4.5 V7.3 H0.7 V1.5 H3.5 M3.5 4.5 L7.3 0.7" fill="none" stroke="#888" stroke-width="0.8"/></svg>
<div class="a" style="left:113px;top:127.6px;width:10.4px;height:10px;background:#fcf400"></div>
<div class="t" style="left:116px;top:129px;font-size:7px;color:#222">2</div>
<div class="cb" style="left:126.4px;top:125.5px;width:76.5px;height:15px"></div>
<svg style="left:130px;top:132px" width="5" height="3"><polyline points="0.3,0.3 2.5,2.3 4.7,0.3" stroke="#999" stroke-width="0.7" fill="none"/></svg>
<div class="t ui" style="left:137px;top:128.7px;font-size:7.4px;transform:scaleX(0.92);transform-origin:left">Bambu PLA Basic</div>
<svg style="left:206px;top:128px" width="8" height="8"><path d="M6 4.5 V7.3 H0.7 V1.5 H3.5 M3.5 4.5 L7.3 0.7" fill="none" stroke="#888" stroke-width="0.8"/></svg>
<!-- Traiter -->
<div class="hd" style="top:149.7px;height:15.5px"></div>
<div class="a" style="left:0;top:165px;width:217px;height:1.5px;background:#d4d4d4"></div>
<svg style="left:5px;top:153px" width="9" height="9"><g fill="none" stroke="#777" stroke-width="0.8"><path d="M1 2.5 L4 0.8 H8 L5 2.5 Z M1 2.5 V7.5 H5 L8 5.8 V0.8 M1 5 H5 L8 3.3"/></g><path d="M1 5 H5 L8 3.3 V5.8 L5 7.5 H1 Z" fill="#7cd39a"/></svg>
<div class="t ui" style="left:19px;top:154px;font-size:8.2px;color:#444">Traiter</div>
<div class="a" style="left:49px;top:152.2px;width:56px;height:10.7px;border-radius:5.4px;background:#e2e2e2"></div>
<div class="t" style="left:52px;top:154.5px;font-size:6.5px;color:#9a9a9a">Mondial</div>
<div class="a" style="left:76px;top:152.2px;width:29px;height:10.7px;border-radius:5.4px;background:#00ae42"></div>
<div class="t" style="left:80.5px;top:154.5px;font-size:6.5px;color:#fff">Objets</div>
<div class="t ui" style="left:135.5px;top:153.5px;font-size:7.3px;color:#444">Avancé</div>
<div class="a" style="left:166px;top:153.7px;width:14.5px;height:8.3px;border-radius:4.2px;background:#00ae42"></div>
<div class="a" style="left:173px;top:154.7px;width:6.4px;height:6.4px;border-radius:50%;background:#fff"></div>
<svg style="left:188px;top:153px" width="10" height="9"><g fill="none" stroke="#777" stroke-width="0.8"><rect x="0.5" y="0.5" width="9" height="8" rx="1"/><path d="M2.5 2.5 H7.5 M2.5 4.5 H7.5 M2.5 6.5 H7.5 M3.5 0.5 V8.5"/></g></svg>
<svg style="left:206px;top:153px" width="8" height="9"><g fill="none" stroke="#7fcf98" stroke-width="0.8"><circle cx="2" cy="2" r="1.3"/><circle cx="6" cy="2.5" r="1.1"/><circle cx="2" cy="7" r="1.1"/><circle cx="6" cy="7" r="1.3"/><path d="M3 3 L5 6"/></g></svg>
<!-- table -->
<div class="a" style="left:144.7px;top:166.5px;width:0.7px;height:11px;background:#ececec"></div>
<div class="a" style="left:160.4px;top:166.5px;width:0.7px;height:11px;background:#ececec"></div>
<div class="a" style="left:186.2px;top:166.5px;width:0.7px;height:11px;background:#ececec"></div>
<div class="a" style="left:201.7px;top:166.5px;width:0.7px;height:11px;background:#ececec"></div>
<div class="t" style="left:3px;top:169.6px;font-size:6.6px;color:#333">Nom</div>
<div class="t" style="left:166.5px;top:169.6px;font-size:6.3px;color:#333">Fila.</div>
<svg style="left:3px;top:182.5px" width="5" height="4"><polyline points="0.5,0.7 2.5,2.8 4.5,0.7" stroke="#444" stroke-width="0.9" fill="none"/></svg>
<div class="t" style="left:9.5px;top:181.3px;font-size:6.7px;color:#333">Plaque 1</div>
<svg style="left:7px;top:194px" width="5" height="4"><polyline points="0.5,0.7 2.5,2.8 4.5,0.7" stroke="#444" stroke-width="0.9" fill="none"/></svg>
<div class="t" style="left:13.5px;top:192.8px;font-size:6.7px;color:#333">LI3D Nameplate_grosPt.STL</div>
<div class="a" style="left:149px;top:192px;width:7.4px;height:8px;background:#00ae42"></div>
<svg style="left:150px;top:193.5px" width="6" height="5"><polyline points="0.8,2.5 2.4,4 5.2,1" stroke="#fff" stroke-width="0.9" fill="none"/></svg>
<div class="a" style="left:162px;top:190.4px;width:23px;height:10.1px;background:#00ae42"></div>
<div class="t" style="left:171.8px;top:192.3px;font-size:6.6px;color:#fff">1</div>
<svg style="left:191px;top:192px" width="7" height="8"><rect x="0.5" y="0.5" width="6" height="7" fill="none" stroke="#bbb" stroke-width="0.7"/><rect x="1.5" y="3.5" width="3" height="3.5" fill="#a5dcb5"/></svg>
<svg style="left:17px;top:201.5px" width="9" height="9"><path d="M0.5 3 V8.5 H6 V5" fill="none" stroke="#777" stroke-width="0.8"/><path d="M6 0.5 V4.5 M4 2.5 H8" stroke="#00ae42" stroke-width="0.9"/></svg>
<div class="t" style="left:28.5px;top:204.3px;font-size:6.7px;color:#333">LI3D Nameplate_grosPt.STL</div>
<div class="a" style="left:162px;top:202px;width:23px;height:10.6px;background:#00ae42"></div>
<div class="t" style="left:171.8px;top:204.2px;font-size:6.6px;color:#fff">1</div>
<svg style="left:17px;top:213px" width="9" height="9"><path d="M0.5 3 V8.5 H6 V5" fill="none" stroke="#777" stroke-width="0.8"/><circle cx="6" cy="2.5" r="2" fill="#00ae42"/></svg>
<div class="t" style="left:28.5px;top:215.8px;font-size:6.7px;color:#333">Fond 3D.STL</div>
<div class="t" style="left:163px;top:216.3px;font-size:6.3px;color:#333">défaut</div>
<div class="a" style="left:0;top:224.7px;width:217px;height:11.1px;background:#c9c9c9"></div>
<svg style="left:17px;top:224.5px" width="9" height="9"><path d="M0.5 3 V8.5 H6 V5" fill="none" stroke="#777" stroke-width="0.8"/><circle cx="6" cy="2.5" r="2" fill="#00ae42"/></svg>
<div class="t" style="left:28.5px;top:227.3px;font-size:6.7px;color:#333">Fond 3D.STL</div>
<div class="a" style="left:162px;top:225px;width:23px;height:10px;background:#fcf400"></div>
<div class="t" style="left:171.8px;top:227px;font-size:6.6px;color:#222">2</div>
<svg style="left:207px;top:226px" width="6" height="8"><path d="M1.2 3.5 V2.2 A1.9 1.9 0 0 1 5 2.2" fill="none" stroke="#f27c1e" stroke-width="0.9"/><rect x="0.3" y="3.5" width="5.4" height="4.2" fill="#f27c1e"/></svg>
<svg style="left:3px;top:239.5px" width="5" height="4"><polyline points="0.5,0.7 2.5,2.8 4.5,0.7" stroke="#444" stroke-width="0.9" fill="none"/></svg>
<div class="t" style="left:9.5px;top:238.3px;font-size:6.7px;color:#333">À l'extérieur</div>

<!-- settings tabs -->
<div class="a" style="left:0;top:314.5px;width:217px;height:2px;background:#cfcfcf"></div>
<div class="a" style="left:0;top:330.5px;width:217px;height:1px;background:#e4e4e4"></div>
<div class="t" style="left:7.7px;top:320px;font-size:8px;color:#f0805a">Fréquent</div>
<div class="t" style="left:52px;top:320px;font-size:8px;color:#555">Qualité</div>
<div class="t" style="left:88px;top:320px;font-size:8px;color:#f0805a;font-weight:700">Résistance</div>
<div class="a" style="left:88px;top:329.3px;width:41px;height:1.6px;background:#00ae42"></div>
<div class="t" style="left:139.8px;top:320px;font-size:8px;color:#555">La rapidité</div>
<div class="t" style="left:190px;top:320px;font-size:8px;color:#555">Autre</div>
<!-- scrollbar -->
<div class="a" style="left:204.8px;top:335px;width:12px;height:207px;background:#ececec"></div>
<div class="a" style="left:208.3px;top:371.6px;width:6px;height:87px;background:#8a8a8a"></div>

<!-- settings rows -->
<div class="t ui" style="left:12.5px;top:342px;font-size:7.9px;color:#333;line-height:9.1px">Modèle de surface<br>supérieure</div>
<div class="cb" style="left:127px;top:344px;width:62.5px;height:13.5px"></div>
<svg style="left:131px;top:350px" width="5" height="3"><polyline points="0.3,0.3 2.5,2.3 4.7,0.3" stroke="#999" stroke-width="0.7" fill="none"/></svg>
<div class="t ui" style="left:137.5px;top:347.5px;font-size:7.9px">Ligne monot...</div>

<div class="t ui or" style="left:12.5px;top:367px;font-size:7.9px;line-height:9.1px">Couches de coque<br>supérieures</div>
<svg style="left:118.8px;top:372.0px" width="6" height="8"><path d="M1.2 3.5 V2.2 A1.9 1.9 0 0 1 5 2.2" fill="none" stroke="#f27c1e" stroke-width="0.9"/><rect x="0.3" y="3.5" width="5.4" height="4.2" fill="#f27c1e"/></svg>
<div class="cb" style="left:127px;top:369.5px;width:62.5px;height:13.5px"></div>
<svg style="left:130px;top:371px" width="5" height="10"><polyline points="0.5,3 2.5,1 4.5,3" stroke="#aaa" stroke-width="0.6" fill="none"/><polyline points="0.5,7 2.5,9 4.5,7" stroke="#aaa" stroke-width="0.6" fill="none"/></svg>
<div class="t ui" style="left:139.5px;top:373.0px;font-size:7.9px">2</div>

<div class="t ui" style="left:12.5px;top:391.5px;font-size:7.9px;color:#333;line-height:9.1px">Épaisseur de la coque<br>supérieure</div>
<div class="cb" style="left:127px;top:394px;width:62.5px;height:13.5px"></div>
<div class="t ui" style="left:131px;top:397.5px;font-size:7.9px">0,6</div>
<div class="t" style="left:173px;top:398.6px;font-size:6.2px;color:#888">mm</div>

<div class="t ui or" style="left:12.5px;top:417.7px;font-size:7.9px">Modèle de surface inférieure</div>
<svg style="left:118.8px;top:417.5px" width="6" height="8"><path d="M1.2 3.5 V2.2 A1.9 1.9 0 0 1 5 2.2" fill="none" stroke="#f27c1e" stroke-width="0.9"/><rect x="0.3" y="3.5" width="5.4" height="4.2" fill="#f27c1e"/></svg>
<div class="cb" style="left:127.5px;top:414.5px;width:62.3px;height:13.5px"></div>
<svg style="left:131px;top:420.5px" width="5" height="3"><polyline points="0.3,0.3 2.5,2.3 4.7,0.3" stroke="#999" stroke-width="0.7" fill="none"/></svg>
<div class="t ui" style="left:137.5px;top:418.0px;font-size:7.9px">Rectiligne</div>

<div class="t ui or" style="left:12.5px;top:432.5px;font-size:7.9px;line-height:9.1px">Couches inférieures de la<br>coque</div>
<svg style="left:118.8px;top:438.0px" width="6" height="8"><path d="M1.2 3.5 V2.2 A1.9 1.9 0 0 1 5 2.2" fill="none" stroke="#f27c1e" stroke-width="0.9"/><rect x="0.3" y="3.5" width="5.4" height="4.2" fill="#f27c1e"/></svg>
<div class="cb" style="left:127.5px;top:435px;width:62.3px;height:13.5px"></div>
<svg style="left:130px;top:436.5px" width="5" height="10"><polyline points="0.5,3 2.5,1 4.5,3" stroke="#aaa" stroke-width="0.6" fill="none"/><polyline points="0.5,7 2.5,9 4.5,7" stroke="#aaa" stroke-width="0.6" fill="none"/></svg>
<div class="t ui" style="left:139.5px;top:438.5px;font-size:7.9px">0</div>

<div class="t ui or" style="left:12.5px;top:458px;font-size:7.9px;line-height:9.1px">Épaisseur de la coque<br>inférieure</div>
<svg style="left:118.8px;top:463.0px" width="6" height="8"><path d="M1.2 3.5 V2.2 A1.9 1.9 0 0 1 5 2.2" fill="none" stroke="#f27c1e" stroke-width="0.9"/><rect x="0.3" y="3.5" width="5.4" height="4.2" fill="#f27c1e"/></svg>
<div class="cb" style="left:127.5px;top:460.4px;width:62.3px;height:13.2px;background:#efefef;border-color:#e6e6e6"></div>
<div class="t ui" style="left:131px;top:464.0px;font-size:7.9px;color:#aaa">1</div>
<div class="t" style="left:173px;top:464.8px;font-size:6.2px;color:#aaa">mm</div>

<svg style="left:1.5px;top:484.5px" width="9" height="9"><path d="M2.5 0.6 H6.5 L8.5 4.5 L6.5 8.4 H2.5 L0.5 4.5 Z" fill="#8a8a8a"/><path d="M1 4.5 H8 M2 2.5 H7 M2 6.5 H7" stroke="#bbb" stroke-width="0.5"/></svg>
<div class="t" style="left:13.7px;top:485.6px;font-size:7.6px;color:#333;font-weight:700">Remplissage</div>
<div class="a" style="left:61px;top:489.5px;width:140px;height:0.7px;background:#ececec"></div>

<div class="t ui or" style="left:12.5px;top:501px;font-size:7.9px;line-height:9.1px">Faible densité de<br>remplissage</div>
<svg style="left:118.8px;top:507.0px" width="6" height="8"><path d="M1.2 3.5 V2.2 A1.9 1.9 0 0 1 5 2.2" fill="none" stroke="#f27c1e" stroke-width="0.9"/><rect x="0.3" y="3.5" width="5.4" height="4.2" fill="#f27c1e"/></svg>
<div class="cb" style="left:127.5px;top:504.3px;width:62.3px;height:13.4px"></div>
<div class="t ui" style="left:131px;top:506.8px;font-size:7.9px">100</div>
<div class="t" style="left:179.5px;top:508.5px;font-size:6.5px;color:#888">%</div>

<div class="t ui or" style="left:12.5px;top:526.5px;font-size:7.9px;line-height:9.1px">Modèle de remplissage<br>clairsemé</div>
<svg style="left:118.8px;top:532.0px" width="6" height="8"><path d="M1.2 3.5 V2.2 A1.9 1.9 0 0 1 5 2.2" fill="none" stroke="#f27c1e" stroke-width="0.9"/><rect x="0.3" y="3.5" width="5.4" height="4.2" fill="#f27c1e"/></svg>
<div class="cb" style="left:127.5px;top:529.2px;width:62.3px;height:14px"></div>
<svg style="left:131px;top:535px" width="5" height="3"><polyline points="0.3,0.3 2.5,2.3 4.7,0.3" stroke="#999" stroke-width="0.7" fill="none"/></svg>
<div class="t ui" style="left:137.5px;top:531.7px;font-size:7.9px">Rectiligne</div>

<!-- ============ THUMBNAIL ============ -->
<div class="a" style="left:218px;top:34px;width:56px;height:61.5px;background:rgba(160,160,160,0.8);border-radius:0 0 2px 0"></div>
<div class="a" style="left:222px;top:38.2px;width:47.8px;height:47.2px;border:2px solid #4a96e0;background:#e6e6e6;border-radius:3px"></div>
<div class="t" style="left:231px;top:46px;font-size:7px;color:#333">1</div>
<div class="a" style="left:232px;top:59.2px;width:27.5px;height:5.3px;background:#08782a"></div>

<!-- ============ STATS PANEL ============ -->
<div class="a" style="left:746.4px;top:35px;width:192.8px;height:223.3px;background:rgba(36,37,36,0.66)"></div>
<div class="a" style="left:746.4px;top:35px;width:192.8px;height:16px;background:rgba(28,28,28,0.7)"></div>
<svg style="left:753px;top:39px" width="7" height="6"><polyline points="0.5,3 3.5,0.7 6.5,3" stroke="#ddd" stroke-width="0.9" fill="none"/><polyline points="0.5,5.5 3.5,3.2 6.5,5.5" stroke="#ddd" stroke-width="0.9" fill="none"/></svg>
<div class="t sb" style="left:765.7px;top:39.5px">Schéma de couleur</div>
<div class="a" style="left:830.7px;top:37.2px;width:102.6px;height:9.9px;background:#1a1a1a;border:1px solid #3e3e3e;border-radius:1.5px"></div>
<svg style="left:834px;top:41.5px" width="5" height="3"><polyline points="0.3,0.3 2.5,2.3 4.7,0.3" stroke="#ddd" stroke-width="0.7" fill="none"/></svg>
<div class="t st" style="left:843px;top:39.3px">Filament</div>

<div class="t sb" style="left:752px;top:52.9px">Filament</div>
<div class="t sb" style="left:794.6px;top:52.9px">Modèle</div>
<div class="t sb" style="left:842.6px;top:52.9px">Flushed</div>
<div class="t sb" style="left:891.5px;top:52.9px">Total</div>
<div class="a" style="left:752px;top:61.2px;width:187px;height:1px;background:#9a9a9a"></div>

<div class="a" style="left:752.5px;top:65.3px;width:4.8px;height:4.8px;background:#00ae42"></div>
<div class="t st" style="left:761.6px;top:64.5px">1</div>
<div class="t st" style="left:794.6px;top:63.8px;line-height:7.8px">10,80 m<br>32,74 g</div>
<div class="t st" style="left:842.6px;top:63.8px;line-height:7.8px">0,59 m<br>1,80 g</div>
<div class="t st" style="left:891.5px;top:63.8px;line-height:7.8px">11,40 m<br>34,54 g</div>
<div class="a" style="left:752.5px;top:84.3px;width:4.8px;height:4.8px;background:#f5f000"></div>
<div class="t st" style="left:761.6px;top:83.5px">2</div>
<div class="t st" style="left:794.6px;top:82.7px;line-height:7.8px">0,77 m<br>2,34 g</div>
<div class="t st" style="left:842.6px;top:82.7px;line-height:7.8px">0,59 m<br>1,79 g</div>
<div class="t st" style="left:891.5px;top:82.7px;line-height:7.8px">1,37 m<br>4,14 g</div>
<div class="a" style="left:752px;top:101px;width:182px;height:1px;background:#9a9a9a"></div>
<div class="t st" style="left:752px;top:103.3px;line-height:7.8px">Total</div>
<div class="t st" style="left:794.6px;top:103.3px;line-height:7.8px">11,58 m<br>35,09 g</div>
<div class="t st" style="left:842.6px;top:103.3px;line-height:7.8px">1,19 m<br>3,59 g</div>
<div class="t st" style="left:891.5px;top:103.3px;line-height:7.8px">12,76 m<br>38,68 g</div>
<div class="t st" style="left:752px;top:123px">Temps de changement de filament:&nbsp; 10</div>
<div class="t st" style="left:752px;top:132.5px">Coût:&nbsp; 0,97</div>
<div class="t sb" style="left:752px;top:147.3px">Time Estimation</div>
<div class="a" style="left:746px;top:155.6px;width:193px;height:1px;background:#9a9a9a"></div>
<div class="t st" style="left:752px;top:159.3px">Temps de préparation:</div>
<div class="t st" style="left:851px;top:159.3px">6m16s</div>
<div class="t st" style="left:752px;top:169.5px">Temps d'impression du modèle:</div>
<div class="t st" style="left:851px;top:169.5px">55m44s</div>
<div class="t st" style="left:752px;top:179.6px">Total time:</div>
<div class="t st" style="left:851.5px;top:179.6px">1h2m</div>
<div class="t sb" style="left:752px;top:191.8px">Choix</div>
<div class="t sb" style="left:900.7px;top:191.8px">Affichage</div>
<div class="a" style="left:746.3px;top:199.5px;width:192.2px;height:1px;background:#9a9a9a"></div>
<div class="a" style="left:752.6px;top:204.0px;width:4.3px;height:4.3px;background:#f0f0f0"></div>
<div class="t st" style="left:761.4px;top:203.6px">Coutures</div>
<div class="a" style="left:915.4px;top:202.2px;width:7.8px;height:8px;background:#4e4e4e"></div>
<div class="a" style="left:752.6px;top:214.7px;width:4.3px;height:4.3px;background:#3a4aa8"></div>
<div class="t st" style="left:761.4px;top:214.3px">Voyager</div>
<div class="a" style="left:915.4px;top:212.9px;width:7.8px;height:8px;background:#4e4e4e"></div>
<div class="a" style="left:752.6px;top:225.8px;width:4.3px;height:4.3px;background:#d020d0"></div>
<div class="t st" style="left:761.4px;top:225.4px">Se rétracter</div>
<div class="a" style="left:915.4px;top:224.0px;width:7.8px;height:8px;background:#4e4e4e"></div>
<div class="a" style="left:752.6px;top:236.5px;width:4.3px;height:4.3px;background:#40a8d8"></div>
<div class="t st" style="left:761.4px;top:236.1px">Annuler le retrait</div>
<div class="a" style="left:915.4px;top:234.7px;width:7.8px;height:8px;background:#4e4e4e"></div>
<div class="a" style="left:752.6px;top:247.7px;width:4.3px;height:4.3px;background:#f5f000"></div>
<div class="t st" style="left:761.4px;top:247.3px">Essuyer</div>
<div class="a" style="left:915.4px;top:245.9px;width:7.8px;height:8px;background:#4e4e4e"></div>
<svg style="left:916px;top:203px" width="7" height="6"><polyline points="0.7,3 2.8,5 6.5,0.8" stroke="#00ae42" stroke-width="1" fill="none"/></svg>

<!-- ============ VERTICAL SLIDER ============ -->
<div class="a" style="left:982.4px;top:92px;width:5.4px;height:372px;border-radius:2.7px;background:#d6d6d6"></div>
<div class="a" style="left:983px;top:463px;width:3.8px;height:21px;background:#00ae42"></div>
<div class="a" style="left:977.8px;top:456px;width:14px;height:14px;border-radius:50%;background:#00ae42;border:1px solid #fff"></div>
<div class="a" style="left:980.4px;top:462.5px;width:9px;height:1px;background:#fff"></div>
<div class="a" style="left:984.4px;top:458.5px;width:1px;height:9px;background:#fff"></div>
<div class="a" style="left:977.6px;top:476.3px;width:14.5px;height:14.5px;border-radius:50%;background:#00ae42;border:1px solid #fff"></div>
<svg style="left:952px;top:445.6px" width="27" height="17"><path d="M0 0 H21 V13 L26 16.5 H0 Z" fill="#fff"/></svg>
<div class="t" style="left:952.5px;top:446.3px;width:21px;text-align:center;font-size:6.6px;color:#00ae42;line-height:7.6px">6<br>1,20</div>
<svg style="left:952px;top:483.5px" width="27" height="18"><path d="M0 1 H21 L26 0 V0 L21 4 V17.5 H0 Z" fill="#fff"/></svg>
<div class="t" style="left:952.5px;top:485.1px;width:21px;text-align:center;font-size:6.6px;color:#00ae42;line-height:7.6px">1<br>0,20</div>
<svg style="left:974px;top:505px" width="12" height="12"><g fill="#00ae42" stroke="#3a3a3a" stroke-width="0.5"><path d="M6 6 L11.5 8.5 L6 11 L0.5 8.5 Z"/><path d="M6 3.5 L11.5 6 L6 8.5 L0.5 6 Z"/><path d="M6 1 L11.5 3.5 L6 6 L0.5 3.5 Z"/></g></svg>

<!-- ============ HORIZONTAL SLIDER ============ -->
<div class="a" style="left:382px;top:513.9px;width:428px;height:7.2px;border-radius:3.6px;background:#d8d8d8"></div>
<div class="a" style="left:383.2px;top:515.2px;width:426px;height:4.6px;border-radius:2.3px;background:#00ae42"></div>
<div class="a" style="left:801.3px;top:510.6px;width:13.6px;height:13.6px;border-radius:50%;background:#00ae42;border:1px solid #e8e8e8"></div>
<div class="a" style="left:820px;top:512.3px;width:20.7px;height:9.9px;background:#fff;border-radius:1px"></div><svg style="left:816.5px;top:514px" width="4" height="6"><path d="M4 0 L0.3 3 L4 6 Z" fill="#fff"/></svg>
<div class="t" style="left:820px;top:514.2px;width:20.7px;text-align:center;font-size:7px;color:#1ab255;transform:scaleX(0.92)">1325</div>
<!-- XYZ tooltip -->
<div class="a" style="left:514.9px;top:492px;width:127.5px;height:16.8px;background:#fff;border-radius:2px"></div>
<div class="t" style="left:525.6px;top:497px;font-size:6.7px;color:#9a9a9a"><span style="color:#555">X:</span> 144,522&nbsp;&nbsp; <span style="color:#555">Y:</span> 140,054&nbsp;&nbsp; <span style="color:#555">Z:</span> 1,200</div>

<!-- ============ WARNING ============ -->
<div class="a" style="left:744.4px;top:472px;width:195.2px;height:23.6px;background:#fff;border:1px solid #f2c7a6;border-radius:2px"></div>
<div class="a" style="left:744.4px;top:472px;width:3px;height:23.4px;background:#f2a36a;border-radius:2px 0 0 2px"></div>
<div class="t" style="left:752px;top:476.5px;font-size:6.4px;color:#333">ATTENTION:</div>
<div class="t" style="left:752px;top:485.2px;font-size:6.7px;color:#333">Les exécuteurs de support sont utilisés mais le..&nbsp; <span style="color:#00ae42;text-decoration:underline">Suite</span></div>
<div class="a" style="left:922px;top:476.8px;width:13.2px;height:13.2px;border-radius:50%;background:#e4e4e4"></div>
<svg style="left:925px;top:480px" width="7" height="7"><g stroke="#9a9a9a" stroke-width="0.9"><line x1="0.5" y1="0.5" x2="6.5" y2="6.5"/><line x1="6.5" y1="0.5" x2="0.5" y2="6.5"/></g></svg>

<!-- ============ TASKBAR ============ -->
<div class="a" style="left:0;top:542px;width:1000px;height:4px;background:#cde9ec"></div>
<div class="a" style="left:779.5px;top:542px;width:56.5px;height:4px;background:#e6f4f6"></div>
<div class="t" style="left:943.5px;top:543px;font-size:5px;color:#444;font-weight:700">03:22:33</div>
</body></html>
